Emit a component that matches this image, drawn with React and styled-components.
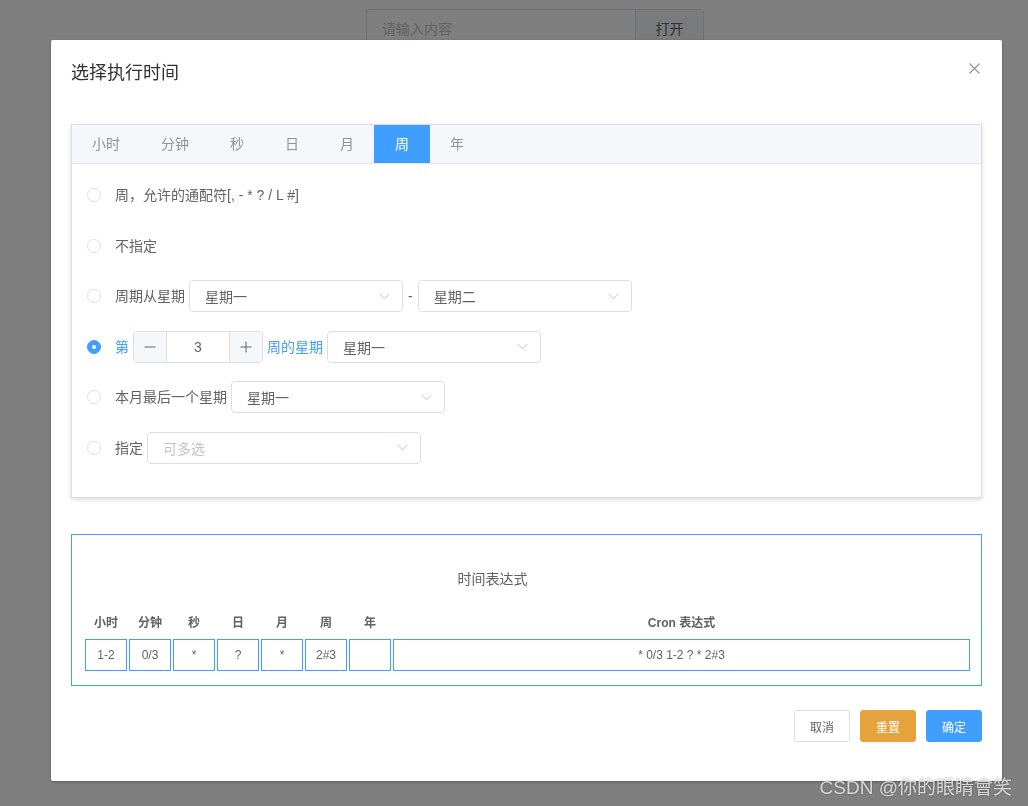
import React from "react";
import styled, { createGlobalStyle } from "styled-components";

const GlobalStyle = createGlobalStyle`
  html, body {
    margin: 0;
    padding: 0;
    background: #fff;
  }
  body {
    font-family: "Liberation Sans", "Noto Sans CJK SC", sans-serif;
    color: #606266;
    font-size: 14px;
  }
`;

const FONT = `"Liberation Sans", "Noto Sans CJK SC", sans-serif`;

const tabs = ["小时", "分钟", "秒", "日", "月", "周", "年"];
const weekValues = [
  { label: "小时", value: "1-2" },
  { label: "分钟", value: "0/3" },
  { label: "秒", value: "*" },
  { label: "日", value: "?" },
  { label: "月", value: "*" },
  { label: "周", value: "2#3" },
  { label: "年", value: "" },
];

function Chevron() {
  return (
    <svg width="11" height="7" viewBox="0 0 11 7">
      <polyline points="0.5,0.8 5.5,5.8 10.5,0.8" fill="none" stroke="#c0c4cc" strokeWidth="1" />
    </svg>
  );
}

function Select({ value, placeholder, width }) {
  return (
    <SelectBox $width={width}>
      <SelectText $placeholder={!value}>{value || placeholder}</SelectText>
      <Chevron />
    </SelectBox>
  );
}

function Radio({ checked, children }) {
  return (
    <RadioWrap>
      <RadioDot $checked={checked} />
      <RadioLabel $checked={checked}>{children}</RadioLabel>
    </RadioWrap>
  );
}

function InputNumber({ value }) {
  return (
    <NumBox>
      <NumBtn>
        <svg width="12" height="12" viewBox="0 0 12 12">
          <line x1="0.5" y1="6" x2="11.5" y2="6" stroke="#606266" strokeWidth="1" />
        </svg>
      </NumBtn>
      <NumValue>{value}</NumValue>
      <NumBtn $right>
        <svg width="12" height="12" viewBox="0 0 12 12">
          <line x1="0.5" y1="6" x2="11.5" y2="6" stroke="#606266" strokeWidth="1" />
          <line x1="6" y1="0.5" x2="6" y2="11.5" stroke="#606266" strokeWidth="1" />
        </svg>
      </NumBtn>
    </NumBox>
  );
}

export default function App() {
  return (
    <>
      <GlobalStyle />
      <Page>
        <InputGroup>
          <BgInput>请输入内容</BgInput>
          <BgAppend>打开</BgAppend>
        </InputGroup>
      </Page>
      <Overlay>
        <Dialog>
          <DialogHeader>
            <DialogTitle>选择执行时间</DialogTitle>
            <CloseBtn>
              <svg width="11" height="11" viewBox="0 0 11 11">
                <line x1="0.5" y1="0.5" x2="10.5" y2="10.5" stroke="#909399" strokeWidth="1.1" />
                <line x1="10.5" y1="0.5" x2="0.5" y2="10.5" stroke="#909399" strokeWidth="1.1" />
              </svg>
            </CloseBtn>
          </DialogHeader>
          <DialogBody>
            <TabsCard>
              <TabsHeader>
                {tabs.map((t) => (
                  <TabItem key={t} $active={t === "周"}>
                    {t}
                  </TabItem>
                ))}
              </TabsHeader>
              <TabsContent>
                <Row>
                  <Radio>周，允许的通配符[, - * ? / L #]</Radio>
                </Row>
                <Row>
                  <Radio>不指定</Radio>
                </Row>
                <Row>
                  <Radio>周期从星期</Radio>
                  <Select value="星期一" />
                  <Dash>-</Dash>
                  <Select value="星期二" />
                </Row>
                <Row>
                  <Radio checked>第</Radio>
                  <InputNumber value="3" />
                  <BlueText>周的星期</BlueText>
                  <Select value="星期一" />
                </Row>
                <Row>
                  <Radio>本月最后一个星期</Radio>
                  <Select value="星期一" />
                </Row>
                <Row>
                  <Radio>指定</Radio>
                  <Select placeholder="可多选" width={274} />
                </Row>
              </TabsContent>
            </TabsCard>

            <ExprCard>
              <ExprTitle>时间表达式</ExprTitle>
              <ExprGrid>
                {weekValues.map((w) => (
                  <HeadCell key={w.label}>{w.label}</HeadCell>
                ))}
                <HeadCell>Cron 表达式</HeadCell>
                {weekValues.map((w) => (
                  <ValueCell key={w.label}>{w.value}</ValueCell>
                ))}
                <ValueCell>* 0/3 1-2 ? * 2#3</ValueCell>
              </ExprGrid>
            </ExprCard>
          </DialogBody>
          <DialogFooter>
            <Button>取消</Button>
            <Button $type="warning">重置</Button>
            <Button $type="primary">确定</Button>
          </DialogFooter>
        </Dialog>
        <Watermark>CSDN @你的眼睛會笑</Watermark>
      </Overlay>
    </>
  );
}

const Page = styled.div`
  padding: 9px 0 0 366px;
`;

const InputGroup = styled.div`
  display: flex;
  width: 338px;
  height: 40px;
`;

const BgInput = styled.div`
  flex: 1;
  box-sizing: border-box;
  border: 1px solid #dcdfe6;
  border-radius: 4px 0 0 4px;
  padding: 0 15px;
  line-height: 38px;
  color: #c0c4cc;
  font-size: 14px;
`;

const BgAppend = styled.div`
  box-sizing: border-box;
  width: 68px;
  border: 1px solid #dcdfe6;
  border-left: none;
  border-radius: 0 4px 4px 0;
  background: #f5f7fa;
  text-align: center;
  line-height: 38px;
  color: #606266;
  font-size: 14px;
`;

const Overlay = styled.div`
  position: fixed;
  inset: 0;
  background: rgba(0, 0, 0, 0.5);
  overflow: hidden;
`;

const Dialog = styled.div`
  margin: 40px 0 0 51px;
  width: 951px;
  background: #fff;
  border-radius: 2px;
  box-shadow: 0 1px 3px rgba(0, 0, 0, 0.3);
  position: relative;
`;

const DialogHeader = styled.div`
  padding: 21px 20px 9px;
`;

const DialogTitle = styled.span`
  display: block;
  font-size: 18px;
  line-height: 24px;
  color: #303133;
  font-family: ${FONT};
`;

const CloseBtn = styled.div`
  position: absolute;
  top: 23px;
  right: 22px;
  width: 11px;
  height: 11px;
  display: flex;
`;

const DialogBody = styled.div`
  padding: 30px 20px 14px;
`;

const TabsCard = styled.div`
  box-sizing: border-box;
  height: 374px;
  border: 1px solid #dcdfe6;
  background: #fff;
  box-shadow: 0 2px 4px 0 rgba(0, 0, 0, 0.12), 0 0 6px 0 rgba(0, 0, 0, 0.04);
`;

const TabsHeader = styled.div`
  display: flex;
  height: 38px;
  background: #f5f7fa;
  border-bottom: 1px solid #e4e7ed;
`;

const TabItem = styled.div`
  box-sizing: border-box;
  height: 38px;
  line-height: 38px;
  padding: 0 20px;
  border-left: 1px solid transparent;
  border-right: 1px solid transparent;
  font-size: 14px;
  color: ${(p) => (p.$active ? "#fff" : "#909399")};
  background: ${(p) => (p.$active ? "#409eff" : "transparent")};
  &:first-child {
    margin-left: -1px;
  }
  & + & {
    margin-left: -1px;
  }
`;

const TabsContent = styled.div`
  padding: 15px;
`;

const Row = styled.div`
  display: flex;
  align-items: center;
  height: 32px;
  margin-bottom: 18.6px;
  gap: 4px;
`;

const RadioWrap = styled.label`
  display: inline-flex;
  align-items: center;
`;

const RadioDot = styled.span`
  box-sizing: border-box;
  width: 14px;
  height: 14px;
  border-radius: 50%;
  border: 1px solid ${(p) => (p.$checked ? "#409eff" : "#dcdfe6")};
  background: ${(p) => (p.$checked ? "#409eff" : "#fff")};
  display: flex;
  align-items: center;
  justify-content: center;
  &::after {
    content: "";
    width: 4px;
    height: 4px;
    border-radius: 50%;
    background: #fff;
    display: ${(p) => (p.$checked ? "block" : "none")};
  }
`;

const RadioLabel = styled.span`
  margin-left: 14px;
  font-size: 14px;
  line-height: 20px;
  color: ${(p) => (p.$checked ? "#409eff" : "#606266")};
`;

const BlueText = styled.span`
  font-size: 14px;
  line-height: 20px;
  color: #409eff;
`;

const Dash = styled.span`
  font-size: 14px;
  color: #606266;
  margin: 0 1px;
`;

const SelectBox = styled.div`
  box-sizing: border-box;
  width: ${(p) => p.$width || 214}px;
  height: 32px;
  border: 1px solid #dcdfe6;
  border-radius: 4px;
  display: flex;
  align-items: center;
  justify-content: space-between;
  padding: 0 12px 0 15px;
`;

const SelectText = styled.span`
  font-size: 14px;
  color: ${(p) => (p.$placeholder ? "#c0c4cc" : "#606266")};
`;

const NumBox = styled.div`
  box-sizing: border-box;
  width: 130px;
  height: 32px;
  border: 1px solid #dcdfe6;
  border-radius: 4px;
  display: flex;
  overflow: hidden;
`;

const NumBtn = styled.div`
  width: 32px;
  background: #f5f7fa;
  display: flex;
  align-items: center;
  justify-content: center;
  border-left: ${(p) => (p.$right ? "1px solid #dcdfe6" : "none")};
  border-right: ${(p) => (p.$right ? "none" : "1px solid #dcdfe6")};
`;

const NumValue = styled.div`
  flex: 1;
  text-align: center;
  line-height: 30px;
  font-size: 14px;
  color: #606266;
`;

const ExprCard = styled.div`
  margin-top: 36px;
  border: 1px solid #409eff;
  padding: 34px 11px 14px 13px;
`;

const ExprTitle = styled.div`
  text-align: center;
  font-size: 14px;
  line-height: 20px;
  color: #606266;
  margin-bottom: 24px;
  padding-right: 70px;
`;

const ExprGrid = styled.div`
  display: grid;
  grid-template-columns: repeat(7, 42px) 1fr;
  column-gap: 2px;
  row-gap: 6px;
`;

const HeadCell = styled.div`
  text-align: center;
  font-size: 12px;
  font-weight: bold;
  line-height: 20px;
  color: #606266;
`;

const ValueCell = styled.div`
  box-sizing: border-box;
  height: 32px;
  border: 1px solid #409eff;
  text-align: center;
  line-height: 30px;
  font-size: 12px;
  color: #606266;
`;

const DialogFooter = styled.div`
  display: flex;
  justify-content: flex-end;
  gap: 10px;
  padding: 10px 20px 39px;
`;

const buttonColors = {
  primary: { bg: "#409eff", border: "#409eff", color: "#fff" },
  warning: { bg: "#e6a23c", border: "#e6a23c", color: "#fff" },
  default: { bg: "#fff", border: "#dcdfe6", color: "#606266" },
};

const Button = styled.button`
  box-sizing: border-box;
  width: 56px;
  height: 32px;
  padding: 0;
  border-radius: 3px;
  font-family: ${FONT};
  font-size: 12px;
  border: 1px solid ${(p) => buttonColors[p.$type || "default"].border};
  background: ${(p) => buttonColors[p.$type || "default"].bg};
  color: ${(p) => buttonColors[p.$type || "default"].color};
`;

const Watermark = styled.div`
  position: absolute;
  right: 16px;
  bottom: 6px;
  font-size: 19px;
  line-height: 24px;
  color: rgba(255, 255, 255, 0.75);
  text-shadow: 0 0 2px rgba(0, 0, 0, 0.4);
`;
